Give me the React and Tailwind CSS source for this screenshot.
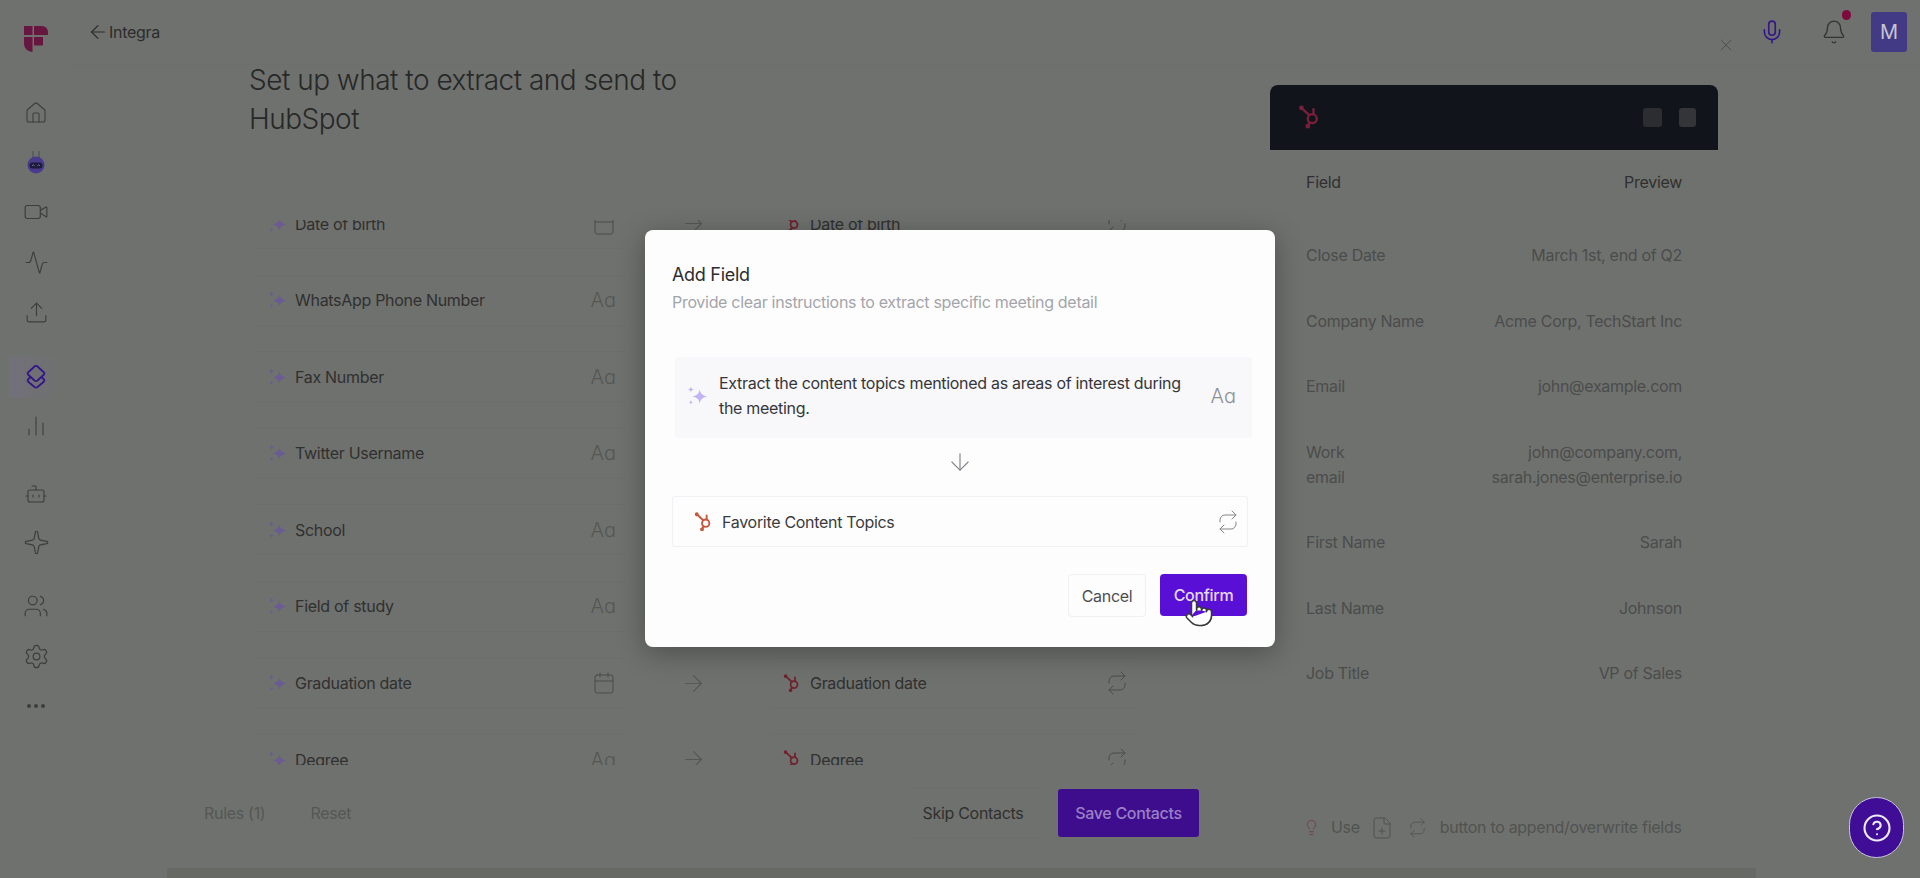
import { ArrowDown, ArrowLeft, ArrowRight, Activity, Bell, Bot, Calendar, ChartNoAxesColumn, CircleHelp, Ellipsis, FilePlus, House, Lightbulb, Mic, Pointer, Settings, Sparkle, Upload, Users, Video, X } from 'lucide-react'

const rows = [
  { name: 'Date of birth', date: true },
  { name: 'WhatsApp Phone Number' },
  { name: 'Fax Number' },
  { name: 'Twitter Username' },
  { name: 'School' },
  { name: 'Field of study' },
  { name: 'Graduation date', date: true },
  { name: 'Degree' },
]

const preview = [
  ['Close Date', 'March 1st, end of Q2'],
  ['Company Name', 'Acme Corp, TechStart Inc'],
  ['Email', 'john@example.com'],
  ['Work email', 'john@company.com, sarah.jones@enterprise.io'],
  ['First Name', 'Sarah'],
  ['Last Name', 'Johnson'],
  ['Job Title', 'VP of Sales'],
]

function Logo() {
  return (
    <svg width="24" height="26" viewBox="0 0 24 26" fill="#66163f">
      <rect x="0" y="0" width="8.5" height="9" />
      <path d="M10 0h8a6 6 0 0 1 6 6v3H10z" />
      <path d="M0 11h8.5v15A8.5 8.5 0 0 1 0 17.500z" />
      <rect x="10" y="11" width="9" height="8.500" />
    </svg>
  )
}

function HubIcon({ size = 18, color = '#c4593b' }) {
  return (
    <svg width={size} height={size * 1.1} viewBox="0 0 18 20" fill="none" stroke={color} strokeWidth="1.9" strokeLinecap="round">
      <circle cx="11.700" cy="11.300" r="3.700" />
      <path d="M2.700 2.300l6.500 6" />
      <path d="M12.700 3.500v4" />
      <path d="M8 17.500l1.500-3.300" />
      <circle cx="2.700" cy="2.300" r="1" fill={color} />
      <circle cx="8" cy="17.500" r="1" fill={color} />
    </svg>
  )
}

function Sparkles({ color = '#6a5a96', size = 18 }) {
  return (
    <svg width={size} height={size} viewBox="0 0 18 18" fill={color}>
      <path d="M11.500 3c.6 3.800 2.200 5.500 6.500 6.500-4.300 1-5.900 2.700-6.500 6.500-.6-3.800-2.200-5.500-6.500-6.500 4.300-1 5.900-2.700 6.500-6.500z" />
      <path d="M3.500 .5c.3 1.600.9 2.300 2.500 2.700-1.600.4-2.200 1.100-2.500 2.700C3.200 4.300 2.600 3.600 1 3.200 2.600 2.800 3.200 2.100 3.500 .5z" />
      <path d="M3.500 12.500c.2 1.300.8 1.900 2.100 2.200-1.300.3-1.900.9-2.100 2.200-.2-1.300-.8-1.900-2.100-2.200 1.300-.3 1.900-.9 2.100-2.200z" />
    </svg>
  )
}

function RepeatIcon({ className = '', width = 20, height = 24 }) {
  return (
    <svg width={width} height={height} viewBox="0 0 20 24" fill="none" stroke="currentColor" strokeWidth="1" strokeLinecap="round" strokeLinejoin="round" className={className}>
      <path d="M14 1l4 4-4 4" />
      <path d="M2 12v-2a5 5 0 0 1 5-5h11" />
      <path d="M6 23l-4-4 4-4" />
      <path d="M18 12v2a5 5 0 0 1-5 5H2" />
    </svg>
  )
}

function PurpleBot() {
  return (
    <svg width="20" height="24" viewBox="0 0 20 24" fill="none">
      <path d="M7 8V1M13 8V1" stroke="#4b4b52" strokeWidth="1" />
      <circle cx="10" cy="15" r="8.500" fill="#4a3a8c" />
      <rect x="3.500" y="12.500" width="13" height="6" rx="3" fill="#1d1b3a" />
      <path d="M6 15.800l1.300-1 1.300 1M11.400 15.800l1.300-1 1.300 1" stroke="#8a84c0" strokeWidth=".8" />
    </svg>
  )
}

function LayersIcon() {
  return (
    <svg width="24" height="24" viewBox="0 0 24 24" fill="none" stroke="#33178a" strokeWidth="1.800" strokeLinejoin="round">
      <path d="M10.500 1.500a2 2 0 0 1 3 0l6.500 6a1.500 1.500 0 0 1 0 2l-6.500 6a2 2 0 0 1-3 0l-6.500-6a1.500 1.500 0 0 1 0-2z" />
      <path d="M6.500 12l-2.500 2.500a1.500 1.500 0 0 0 0 2l6.500 5.500a2 2 0 0 0 3 0l6.500-5.500a1.500 1.500 0 0 0 0-2L17.500 12" />
    </svg>
  )
}

function Sidebar() {
  const icon = 'text-[#3d3f3e]'
  return (
    <aside className="w-[72px] shrink-0 flex flex-col items-center pt-[26px]">
      <Logo />
      <div className="mt-[36px] flex flex-col items-center">
        <div className="h-[50px] flex items-center"><House size={24} strokeWidth={1.1} className={icon} /></div>
        <div className="h-[50px] flex items-center -mt-[1px]"><PurpleBot /></div>
        <div className="h-[50px] flex items-center"><Video size={26} strokeWidth={1.1} className={icon} /></div>
        <div className="h-[50px] flex items-center"><Activity size={25} strokeWidth={1.1} className={icon} /></div>
        <div className="h-[50px] flex items-center"><Upload size={25} strokeWidth={1.1} className={icon} /></div>
      </div>
      <div className="mt-[19px] w-[54px] h-[42px] flex items-center justify-center bg-linear-to-r from-[#72707a] to-[#6f716e]"><LayersIcon /></div>
      <div className="mt-[7px] h-[42px] flex items-center"><ChartNoAxesColumn size={24} strokeWidth={1.1} className={icon} /></div>
      <div className="mt-[22px] flex flex-col items-center">
        <div className="h-[49px] flex items-center"><Bot size={24} strokeWidth={1.1} className={icon} /></div>
        <div className="h-[49px] flex items-center"><Sparkle size={27} strokeWidth={1.1} className={icon} /></div>
      </div>
      <div className="mt-[14px] flex flex-col items-center">
        <div className="h-[50px] flex items-center"><Users size={26} strokeWidth={1.1} className={icon} /></div>
        <div className="h-[50px] flex items-center"><Settings size={27} strokeWidth={1.1} className={icon} /></div>
        <div className="h-[50px] flex items-center"><Ellipsis size={24} strokeWidth={2} className={icon} /></div>
      </div>
    </aside>
  )
}

function FieldRow({ name, date }) {
  return (
    <div className="h-[51px] shrink-0 flex items-center text-[16px] tracking-[-0.3px] text-[#2f302f]">
      <div className="w-[370px] h-full flex items-center pl-[13px] pr-[9px] border-y border-[#6c6e6b]">
        <Sparkles />
        <span className="ml-[9px] flex-1">{name}</span>
        {date
          ? <Calendar size={24} strokeWidth={1} className="text-[#4b4d4b]" />
          : <span className="text-[20px] tracking-normal font-light text-[#555755]">Aɑ</span>}
      </div>
      <div className="w-[145px] flex justify-center pr-[8px]"><ArrowRight size={27} strokeWidth={1} className="text-[#555755]" /></div>
      <div className="w-[368px] h-full flex items-center pl-[13px] pr-[11px] border-y border-[#6c6e6b]">
        <HubIcon size={17} color="#6e2430" />
        <span className="ml-[10px] flex-1">{name}</span>
        <RepeatIcon className="text-[#4b4d4b]" />
      </div>
    </div>
  )
}

function AddFieldModal() {
  return (
    <div className="absolute left-[645px] top-[230px] w-[630px] h-[417px] rounded-[8px] bg-[#fdfdfd] px-[27px] pt-[31px] tracking-[-0.3px] shadow-[0_6px_28px_rgba(0,0,0,0.3)]">
      <div className="text-[18px] leading-[28px] text-[#2c2d31]">Add Field</div>
      <div className="mt-[1px] text-[16px] leading-[24px] text-[#a4a5aa]">Provide clear instructions to extract specific meeting detail</div>

      <div className="mt-[43px] ml-[3px] w-[577px] h-[81px] flex items-center pl-[12px] pr-[16px] pb-[3px] bg-[#f8f8fb] rounded-[2px]">
        <Sparkles color="#c3b4f3" size={20} />
        <p className="ml-[12px] w-[475px] text-[16px] leading-[25px] text-[#35363a]">Extract the content topics mentioned as areas of interest during the meeting.</p>
        <span className="ml-auto text-[20px] tracking-normal font-light text-[#8f9095]">Aɑ</span>
      </div>

      <div className="h-[58px] pb-[10px] flex items-center justify-center"><ArrowDown size={28} strokeWidth={1} className="text-[#85868b]" /></div>

      <div className="w-[576px] h-[51px] flex items-center pl-[21px] pr-[9px] border border-[#f0f0f5] rounded-[2px]">
        <HubIcon />
        <span className="ml-[10px] flex-1 text-[16px] text-[#3a3b3f]">Favorite Content Topics</span>
        <RepeatIcon className="text-[#85868b]" />
      </div>

      <div className="mt-[27px] flex justify-end gap-[14px] w-[575px]">
        <button className="w-[78px] h-[43px] rounded-[4px] border border-[#f0f0f3] text-[16px] text-[#4d4e52]">Cancel</button>
        <button className="w-[87px] h-[42px] rounded-[4px] bg-[#590fd6] text-[16px] font-medium text-[#e6dcf8]">Confirm</button>
      </div>
    </div>
  )
}

export default function App() {
  return (
    <div className="relative w-full h-[878px] overflow-hidden flex bg-[#6f716e] font-['Inter',sans-serif]">
      <Sidebar />

      <div className="flex-1 min-w-0 flex flex-col">
        {/* top bar */}
        <header className="h-[65px] shrink-0 flex items-start border-b border-[#6d6f6c]">
          <div className="ml-[15px] mt-[20px] flex items-center text-[16px] tracking-[-0.3px] text-[#2b2c2c]">
            <ArrowLeft size={22} strokeWidth={1.3} />
            <span>Integra</span>
          </div>
          <X size={20} strokeWidth={1} className="ml-auto mt-[35px] text-[#4a4c4a]" />
          <Mic size={26} strokeWidth={1.5} className="ml-[23px] mt-[19px] text-[#33178a]" />
          <div className="relative ml-[36px] mt-[19px]">
            <Bell size={26} strokeWidth={1.2} className="text-[#333534]" />
            <span className="absolute -right-[4px] -top-[9px] w-[9px] h-[10px] rounded-full bg-[#7c0b3c]" />
          </div>
          <div className="ml-[24px] mr-[13px] mt-[12px] w-[36px] h-[40px] rounded-[3px] bg-[#433a85] flex items-center justify-center text-[20px] text-[#c5c5d2]">M</div>
        </header>

        <div className="flex-1 min-h-0 flex">
          {/* mapping column */}
          <main className="w-[1198px] shrink-0 flex flex-col">
            <h1 className="-mt-[4px] pl-[177px] w-[620px] text-[28px] leading-[39px] tracking-[-0.5px] font-light text-[#272827]">Set up what to extract and send to HubSpot</h1>
            <div className="mt-[81px] h-[545px] overflow-hidden pl-[183px]">
              <div className="-mt-[22px] flex flex-col gap-[25.600px]">
                {rows.map((r) => <FieldRow key={r.name} {...r} />)}
              </div>
            </div>
            <div className="mt-[23px] h-[50px] flex items-center pl-[132px] pr-[71px] text-[16px] tracking-[-0.3px]">
              <span className="text-[#555755]">Rules (1)</span>
              <span className="ml-[45px] text-[#555755]">Reset</span>
              <button className="ml-auto w-[131px] h-[50px] pr-[5px] border-y border-[#6c6e6b] text-[#2f302f]">Skip Contacts</button>
              <button className="ml-[17px] w-[141px] h-[48px] rounded-[3px] bg-[#3e0d8d] font-medium text-[#9a80c6]">Save Contacts</button>
            </div>
          </main>

          {/* preview panel */}
          <section className="w-[448px] shrink-0 pt-[20px] pb-[28px] flex flex-col">
            <div className="h-[65px] shrink-0 flex items-center pl-[28px] pr-[22px] rounded-t-[8px] bg-[#12141c]">
              <HubIcon size={22} color="#7a1f3a" />
              <span className="ml-auto w-[19px] h-[19px] rounded-[3px] bg-[#2b2d31]" />
              <span className="ml-[17px] w-[17px] h-[19px] rounded-[3px] bg-[#333539]" />
            </div>
            <div className="px-[36px] flex-1 flex flex-col text-[16px] leading-[25px] tracking-[-0.3px]">
              <div className="mt-[20px] flex justify-between text-[#2f302f]">
                <span>Field</span>
                <span>Preview</span>
              </div>
              <div className="mt-[48px] flex flex-col gap-[40.500px] text-[#4b4c4c]">
                {preview.map(([label, value]) => (
                  <div key={label} className="flex justify-between">
                    <span className={label === 'Work email' ? 'w-[50px]' : ''}>{label}</span>
                    <span className="w-[230px] text-right">{value}</span>
                  </div>
                ))}
              </div>
              <div className="mt-auto flex items-center text-[#515351]">
                <Lightbulb size={17} strokeWidth={1.2} className="-ml-[3px] text-[#6e3b3f]" />
                <span className="ml-[11px]">Use</span>
                <FilePlus size={24} strokeWidth={1} className="ml-[10px]" />
                <RepeatIcon width={17} height={20} className="ml-[15px]" />
                <span className="ml-[14px]">button to append/overwrite fields</span>
              </div>
            </div>
          </section>
        </div>

        <div className="h-[10px] shrink-0 ml-[95px] w-[1589px] bg-[#676965]" />
      </div>

      <AddFieldModal />

      <Pointer size={30} strokeWidth={1.2} fill="#ffffff" className="absolute left-[1184px] top-[598px] text-[#3a3a3a]" />

      <button className="absolute left-[1849px] top-[797px] w-[55px] h-[61px] rounded-full bg-[#3f0d96] border border-[#c9c4dc] flex items-center justify-center text-[#eee9f8]">
        <CircleHelp size={30} strokeWidth={1.7} />
      </button>
    </div>
  )
}
